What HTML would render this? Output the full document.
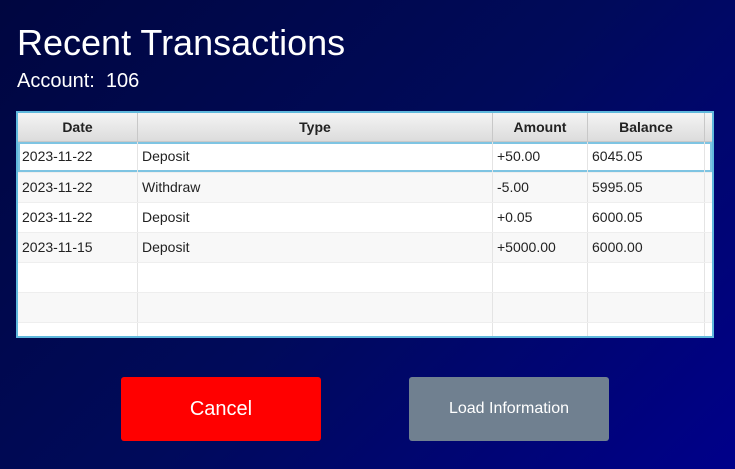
<html><head><style>
body{margin:0;width:735px;height:469px;overflow:hidden;background:linear-gradient(135deg,#000640 0%,#000a5a 50%,#00008a 100%);font-family:"Liberation Sans",sans-serif;position:relative}
.t{position:absolute;left:17px;top:22px;color:#fff;font-size:36px}
.a{position:absolute;left:17px;top:70px;color:#fff;font-size:20px}
.tb{position:absolute;left:16px;top:111px;width:694px;height:223px;border:2px solid #5fb8dc;background:#fff;overflow:hidden}
.r{position:absolute;left:0;width:694px;height:30px;font-size:14px;color:#222;box-sizing:border-box}
.c{position:absolute;top:0;height:100%;box-sizing:border-box;border-right:1px solid #e4e4e4;padding-left:4px;line-height:28px}
.h{top:0;height:29px;background:linear-gradient(#f4f4f4,#dcdcdc);border-bottom:1px solid #c8c8c8;font-weight:bold}
.h .c{text-align:center;padding:0;line-height:28px;border-right:1px solid #c8c8c8}
.b{position:absolute;top:377px;width:200px;height:64px;border-radius:3px;color:#fff;text-align:center;line-height:64px}
</style></head><body>
<div class="t">Recent Transactions</div>
<div class="a">Account:&nbsp; 106</div>
<div class="tb">
<div class="r h"><div class="c" style="left:0;width:120px">Date</div><div class="c" style="left:120px;width:355px">Type</div><div class="c" style="left:475px;width:95px">Amount</div><div class="c" style="left:570px;width:117px">Balance</div></div>
<div class="r" style="top:29px;background:#fff;outline:2px solid #7ec4e2;outline-offset:-2px"><div class="c" style="left:0;width:120px">2023-11-22</div><div class="c" style="left:120px;width:355px">Deposit</div><div class="c" style="left:475px;width:95px">+50.00</div><div class="c" style="left:570px;width:117px">6045.05</div></div>
<div class="r" style="top:59px;background:#f8f8f8;border-top:1px solid #eee"><div class="c" style="left:0;width:120px">2023-11-22</div><div class="c" style="left:120px;width:355px">Withdraw</div><div class="c" style="left:475px;width:95px">-5.00</div><div class="c" style="left:570px;width:117px">5995.05</div></div>
<div class="r" style="top:89px;background:#fff;border-top:1px solid #eee"><div class="c" style="left:0;width:120px">2023-11-22</div><div class="c" style="left:120px;width:355px">Deposit</div><div class="c" style="left:475px;width:95px">+0.05</div><div class="c" style="left:570px;width:117px">6000.05</div></div>
<div class="r" style="top:119px;background:#f8f8f8;border-top:1px solid #eee"><div class="c" style="left:0;width:120px">2023-11-15</div><div class="c" style="left:120px;width:355px">Deposit</div><div class="c" style="left:475px;width:95px">+5000.00</div><div class="c" style="left:570px;width:117px">6000.00</div></div>
<div class="r" style="top:149px;background:#fff;border-top:1px solid #eee"><div class="c" style="left:0;width:120px"></div><div class="c" style="left:120px;width:355px"></div><div class="c" style="left:475px;width:95px"></div><div class="c" style="left:570px;width:117px"></div></div>
<div class="r" style="top:179px;background:#f8f8f8;border-top:1px solid #eee"><div class="c" style="left:0;width:120px"></div><div class="c" style="left:120px;width:355px"></div><div class="c" style="left:475px;width:95px"></div><div class="c" style="left:570px;width:117px"></div></div>
<div class="r" style="top:209px;background:#fff;border-top:1px solid #eee"><div class="c" style="left:0;width:120px"></div><div class="c" style="left:120px;width:355px"></div><div class="c" style="left:475px;width:95px"></div><div class="c" style="left:570px;width:117px"></div></div>
</div>
<div class="b" style="left:121px;background:#ff0000;font-size:20px">Cancel</div>
<div class="b" style="left:409px;background:#708090;font-size:16px">Load Information</div>
</body></html>
